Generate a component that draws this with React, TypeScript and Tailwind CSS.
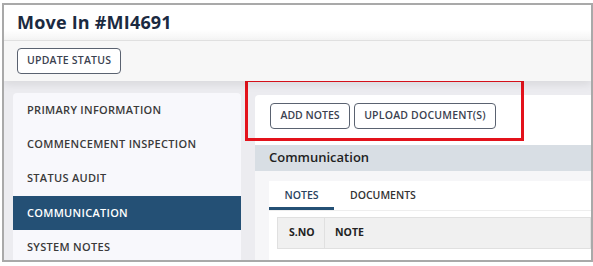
export default function App() {
  const nav = [
    { label: 'PRIMARY INFORMATION', active: false },
    { label: 'COMMENCEMENT INSPECTION', active: false },
    { label: 'STATUS AUDIT', active: false },
    { label: 'COMMUNICATION', active: true },
    { label: 'SYSTEM NOTES', active: false },
  ];

  return (
    <div className="w-[593px] h-[266px] bg-white pt-[3px] pl-[2px] font-['Open_Sans',sans-serif]">
      <div className="w-[591px] h-[259px] border-2 border-[#a9a9a9] overflow-hidden flex flex-col">
        {/* Header */}
        <div className="h-[36px] shrink-0 bg-gradient-to-b from-white from-70% to-[#f4f4f4] border-b border-[#e2e2e2] flex items-center pl-[13px]">
          <h1 className="text-[18px] font-bold text-[#1b2a41] tracking-[0.2px]">Move In #MI4691</h1>
        </div>

        {/* Toolbar */}
        <div className="h-[40px] shrink-0 bg-[#f7f7f7] flex items-center pl-[13px] shadow-[0_4px_8px_rgba(0,0,0,0.08)] relative z-10">
          <button className="h-[26px] px-[9px] border border-[#5a6270] rounded-[4px] text-[10.5px] font-semibold tracking-[0.2px] text-[#3b4250] bg-white">
            UPDATE STATUS
          </button>
        </div>

        {/* Body */}
        <div className="flex-1 bg-[#ececf0] flex gap-[14px] pl-[9px] pt-[14px] min-h-0">
          {/* Sidebar */}
          <div className="w-[228px] shrink-0 -mt-[2px] bg-[#f8f8fc] rounded-t-[4px] flex flex-col">
            {nav.map((item) => (
              <div
                key={item.label}
                className={`h-[34.25px] shrink-0 flex items-center pl-[14px] text-[11px] font-semibold tracking-[0.3px] ${
                  item.active ? 'bg-[#245075] text-white' : 'text-[#3a3a3a]'
                }`}
              >
                {item.label}
              </div>
            ))}
          </div>

          {/* Main */}
          <div className="flex-1 flex flex-col min-w-0 relative">
            <div className="h-[50px] shrink-0 bg-white rounded-tl-[4px] flex items-start pt-[8px] pl-[15px] gap-[4px]">
              <button className="h-[26px] w-[80px] border border-[#5a6270] rounded-[4px] text-[10.5px] font-semibold text-[#3b4250] bg-white">
                ADD NOTES
              </button>
              <button className="h-[26px] w-[142px] border border-[#5a6270] rounded-[4px] text-[10.5px] font-semibold tracking-[0.2px] text-[#3b4250] bg-white">
                UPLOAD DOCUMENT(S)
              </button>
            </div>

            <div className="h-[26px] shrink-0 bg-[#d8dee4] flex items-center pl-[14px]">
              <span className="text-[13px] font-semibold text-[#1f1f1f]">Communication</span>
            </div>

            <div className="flex-1 bg-[#f6f6f8] pl-[14px] pt-[10px]">
              <div className="bg-white h-full">
                <div className="flex h-[30px] items-stretch border-b border-[#eeeeee]">
                  <div className="w-[65px] flex items-center justify-center text-[10.5px] font-semibold text-[#2a4360] border-b-[3px] border-[#245075] pt-[3px]">
                    NOTES
                  </div>
                  <div className="flex items-center pl-[16px] text-[10.5px] font-semibold text-[#333]">
                    DOCUMENTS
                  </div>
                </div>
                <div className="ml-[8px] mt-[6px] h-[32px] bg-[#f0f0f0] border border-[#e0e0e0] flex text-[10.5px] font-bold text-[#222]">
                  <div className="w-[47px] border-r border-[#e0e0e0] flex items-center pl-[11px]">S.NO</div>
                  <div className="flex items-center pl-[10px]">NOTE</div>
                </div>
              </div>
            </div>

            {/* Highlight box */}
            <div className="absolute left-[-10px] top-[-16px] w-[279px] h-[62px] border-[3px] border-[#e3121b] pointer-events-none" />
          </div>
        </div>
      </div>
    </div>
  );
}
